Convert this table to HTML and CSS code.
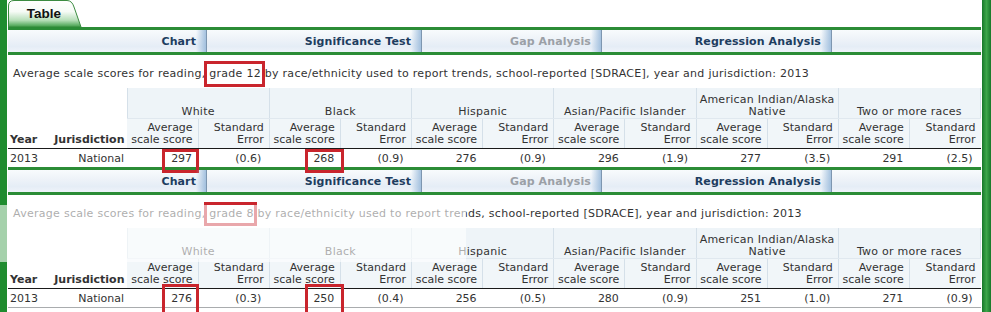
FILE: index.html
```html
<!DOCTYPE html>
<html>
<head>
<meta charset="utf-8">
<title>Table</title>
<link rel="stylesheet" href="styles.css">
</head>
<body>
<div class="frame">
  <div class="tabs">
    <div class="tab">
      <svg class="tab-shape" width="76" height="27" viewBox="0 0 76 27">
        <defs>
          <linearGradient id="tabg" x1="0" y1="0" x2="0" y2="1">
            <stop offset="0" stop-color="#ffffff"/>
            <stop offset="0.42" stop-color="#f6fbf6"/>
            <stop offset="0.75" stop-color="#b5deb7"/>
            <stop offset="1" stop-color="#3f9e48"/>
          </linearGradient>
        </defs>
        <path d="M0.5,27 V6 Q0.5,0.5 6,0.5 H59 Q64,0.5 66,7 L73,27 Z" fill="url(#tabg)" stroke="#3b8b40" stroke-width="1"/>
      </svg>
      <span class="tab-label">Table</span>
    </div>
  </div>

  <section class="sec">
    <nav class="nav">
      <span class="nav-item w1">Chart</span>
      <span class="nav-item w2">Significance Test</span>
      <span class="nav-item w3 disabled">Gap Analysis</span>
      <span class="nav-item w4">Regression Analysis</span>
      <span class="nav-fill"></span>
    </nav>
    <p class="caption">Average scale scores for reading, <span class="mark">grade 12</span> by race/ethnicity used to report trends, school-reported [SDRACE], year and jurisdiction: 2013</p>
    <table class="data">
      <colgroup>
        <col class="c-yr"><col class="c-jur">
        <col><col><col><col><col><col><col><col><col><col><col><col>
      </colgroup>
      <thead>
        <tr class="grp-row">
          <th class="yr" rowspan="2">Year</th>
          <th class="jur" rowspan="2">Jurisdiction</th>
          <th class="grp" colspan="2">White</th>
          <th class="grp" colspan="2">Black</th>
          <th class="grp" colspan="2">Hispanic</th>
          <th class="grp" colspan="2">Asian/Pacific Islander</th>
          <th class="grp" colspan="2">American Indian/Alaska Native</th>
          <th class="grp" colspan="2">Two or more races</th>
        </tr>
        <tr class="sub-row">
          <th class="sub">Average scale score</th><th class="sub">Standard Error</th>
          <th class="sub">Average scale score</th><th class="sub">Standard Error</th>
          <th class="sub">Average scale score</th><th class="sub">Standard Error</th>
          <th class="sub">Average scale score</th><th class="sub">Standard Error</th>
          <th class="sub">Average scale score</th><th class="sub">Standard Error</th>
          <th class="sub">Average scale score</th><th class="sub">Standard Error</th>
        </tr>
      </thead>
      <tbody>
        <tr>
          <td class="yr">2013</td>
          <td class="jur">National</td>
          <td class="hl hl-a">297</td><td class="se">(0.6)</td>
          <td class="hl hl-b">268</td><td class="se">(0.9)</td>
          <td>276</td><td class="se">(0.9)</td>
          <td>296</td><td class="se">(1.9)</td>
          <td>277</td><td class="se">(3.5)</td>
          <td>291</td><td class="se">(2.5)</td>
        </tr>
      </tbody>
    </table>
  </section>

  <section class="sec last">
    <nav class="nav">
      <span class="nav-item w1">Chart</span>
      <span class="nav-item w2">Significance Test</span>
      <span class="nav-item w3 disabled">Gap Analysis</span>
      <span class="nav-item w4">Regression Analysis</span>
      <span class="nav-fill"></span>
    </nav>
    <p class="caption">Average scale scores for reading, <span class="mark mark-8">grade 8</span> by race/ethnicity used to report trends, school-reported [SDRACE], year and jurisdiction: 2013</p>
    <table class="data">
      <colgroup>
        <col class="c-yr"><col class="c-jur">
        <col><col><col><col><col><col><col><col><col><col><col><col>
      </colgroup>
      <thead>
        <tr class="grp-row">
          <th class="yr" rowspan="2">Year</th>
          <th class="jur" rowspan="2">Jurisdiction</th>
          <th class="grp" colspan="2">White</th>
          <th class="grp" colspan="2">Black</th>
          <th class="grp" colspan="2">Hispanic</th>
          <th class="grp" colspan="2">Asian/Pacific Islander</th>
          <th class="grp" colspan="2">American Indian/Alaska Native</th>
          <th class="grp" colspan="2">Two or more races</th>
        </tr>
        <tr class="sub-row">
          <th class="sub">Average scale score</th><th class="sub">Standard Error</th>
          <th class="sub">Average scale score</th><th class="sub">Standard Error</th>
          <th class="sub">Average scale score</th><th class="sub">Standard Error</th>
          <th class="sub">Average scale score</th><th class="sub">Standard Error</th>
          <th class="sub">Average scale score</th><th class="sub">Standard Error</th>
          <th class="sub">Average scale score</th><th class="sub">Standard Error</th>
        </tr>
      </thead>
      <tbody>
        <tr>
          <td class="yr">2013</td>
          <td class="jur">National</td>
          <td class="hl hl-a hl-low">276</td><td class="se">(0.3)</td>
          <td class="hl hl-b hl-low">250</td><td class="se">(0.4)</td>
          <td>256</td><td class="se">(0.5)</td>
          <td>280</td><td class="se">(0.9)</td>
          <td>251</td><td class="se">(1.0)</td>
          <td>271</td><td class="se">(0.9)</td>
        </tr>
      </tbody>
    </table>
  </section>
</div>
<div class="fade"></div>
</body>
</html>
```

FILE: styles.css
```css
html, body {
  margin: 0;
  padding: 0;
  background: #ffffff;
}

body {
  position: relative;
  font-family: "DejaVu Sans", Verdana, sans-serif;
  font-size: 11px;
  color: #333333;
  width: 991px;
  height: 312px;
  overflow: hidden;
}

.frame {
  box-sizing: border-box;
  width: 991px;
  min-height: 312px;
  border-left: 7px solid #1f8c2f;
  padding: 0 10px 0 1px;
  position: relative;
  background:
    linear-gradient(to right, #17782a, #3da64a 50%, #17782a) right top / 9px 100% no-repeat;
  background-origin: border-box;
}

/* tab strip */
.tabs {
  height: 27px;
  display: flex;
  align-items: flex-end;
}

.tab {
  position: relative;
  width: 76px;
  height: 26px;
  display: flex;
  align-items: center;
  justify-content: center;
}

.tab-shape {
  position: absolute;
  left: 0;
  top: -1px;
}

.tab-label {
  position: relative;
  font-family: "Liberation Sans", Arial, sans-serif;
  font-weight: bold;
  font-size: 13.5px;
  color: #111111;
  margin-right: 4px;
  margin-top: -1px;
}

/* nav bar */
.nav {
  display: flex;
  height: 22px;
  border-top: 3px solid #2b8c36;
  border-bottom: 3px solid #2b8c36;
  background: linear-gradient(#f8fbfd, #edf2f8 45%, #e5edf6 75%, #eef3f9);
}

.nav-item {
  position: relative;
  box-sizing: border-box;
  display: flex;
  align-items: center;
  justify-content: flex-end;
  padding-right: 11px;
  font-weight: bold;
  font-size: 11px;
  color: #1d3d5f;
  letter-spacing: 0.1px;
}

.nav-item::after {
  content: "";
  position: absolute;
  right: 0;
  top: 0;
  bottom: 0;
  width: 10px;
  background: linear-gradient(to right, rgba(170, 198, 226, 0), rgba(150, 184, 218, 0.85));
  border-right: 1px solid #7d96b0;
}

.nav-item.disabled {
  color: #9ba0a6;
}

.w1 { width: 199px; }
.w2 { width: 215px; }
.w3 { width: 180px; }
.w4 { width: 230px; }

.nav-fill {
  flex: 1;
}

/* caption */
.caption {
  margin: 0;
  padding: 12px 0 8px 5px;
  line-height: 13px;
  height: 13px;
  white-space: nowrap;
  letter-spacing: 0.28px;
}

.mark {
  position: relative;
}

.mark::after {
  content: "";
  position: absolute;
  left: -5px;
  right: -4px;
  top: -6px;
  bottom: -7px;
  border: 3px solid #c9252d;
}

.mark-8::after {
  right: -3px;
  top: -5px;
  bottom: -6px;
}

/* table */
.data {
  border-collapse: collapse;
  table-layout: fixed;
  width: 973px;
  font-size: 11px;
  line-height: 12px;
}

.c-yr { width: 40px; }
.c-jur { width: 79px; }

.data th {
  font-weight: normal;
  color: #333333;
}

.data th.yr,
.data th.jur {
  font-weight: bold;
  background: #ffffff;
  vertical-align: bottom;
  padding: 0 2px 2px 2px;
  border-bottom: 1px solid #1a1a1a;
}

.data th.yr { text-align: left; }
.data th.jur { text-align: right; }

.grp-row {
  height: 30px;
}

.grp {
  background: #eef4f8;
  text-align: center;
  vertical-align: bottom;
  padding: 0 1px 0 1px;
  letter-spacing: 0.25px;
  border-left: 1px solid #d5e0e9;
  border-right: 1px solid #d5e0e9;
  border-bottom: 1px solid #e0e8ef;
}

.grp-row .grp:first-of-type {
  border-left-color: #eef4f8;
}

.sub-row {
  height: 29px;
}

.sub {
  background: #f1f6f9;
  text-align: right;
  vertical-align: bottom;
  padding: 3px 5px 2px 2px;
  border-right: 1px solid #d5e0e9;
  border-bottom: 1px solid #1a1a1a;
}

.sub:last-child {
  border-right: none;
}

.data tbody tr {
  height: 19px;
}

.data td {
  text-align: right;
  padding: 4px 6px 2px 2px;
  background: #ffffff;
}

.data td.se {
  padding-right: 8px;
}

.data td.yr {
  text-align: left;
  padding-left: 2px;
}

.data td.jur {
  padding-right: 3px;
}

.hl {
  position: relative;
}

.hl::after {
  content: "";
  position: absolute;
  top: 0;
  height: 24px;
  box-sizing: border-box;
  border: 3px solid #c9252d;
}

.hl-a::after {
  left: 35px;
  width: 37px;
}

.hl-b::after {
  left: 36px;
  width: 39px;
}

.hl-low::after {
  top: -5px;
  height: 32px;
}

.sec.last .data {
  border-bottom: 1px solid #a9acae;
}

/* watermark-like fade over part of the lower block */
.fade {
  position: absolute;
  left: 0;
  top: 205px;
  width: 466px;
  height: 57px;
  background: rgba(255, 255, 255, 0.6);
}
```
